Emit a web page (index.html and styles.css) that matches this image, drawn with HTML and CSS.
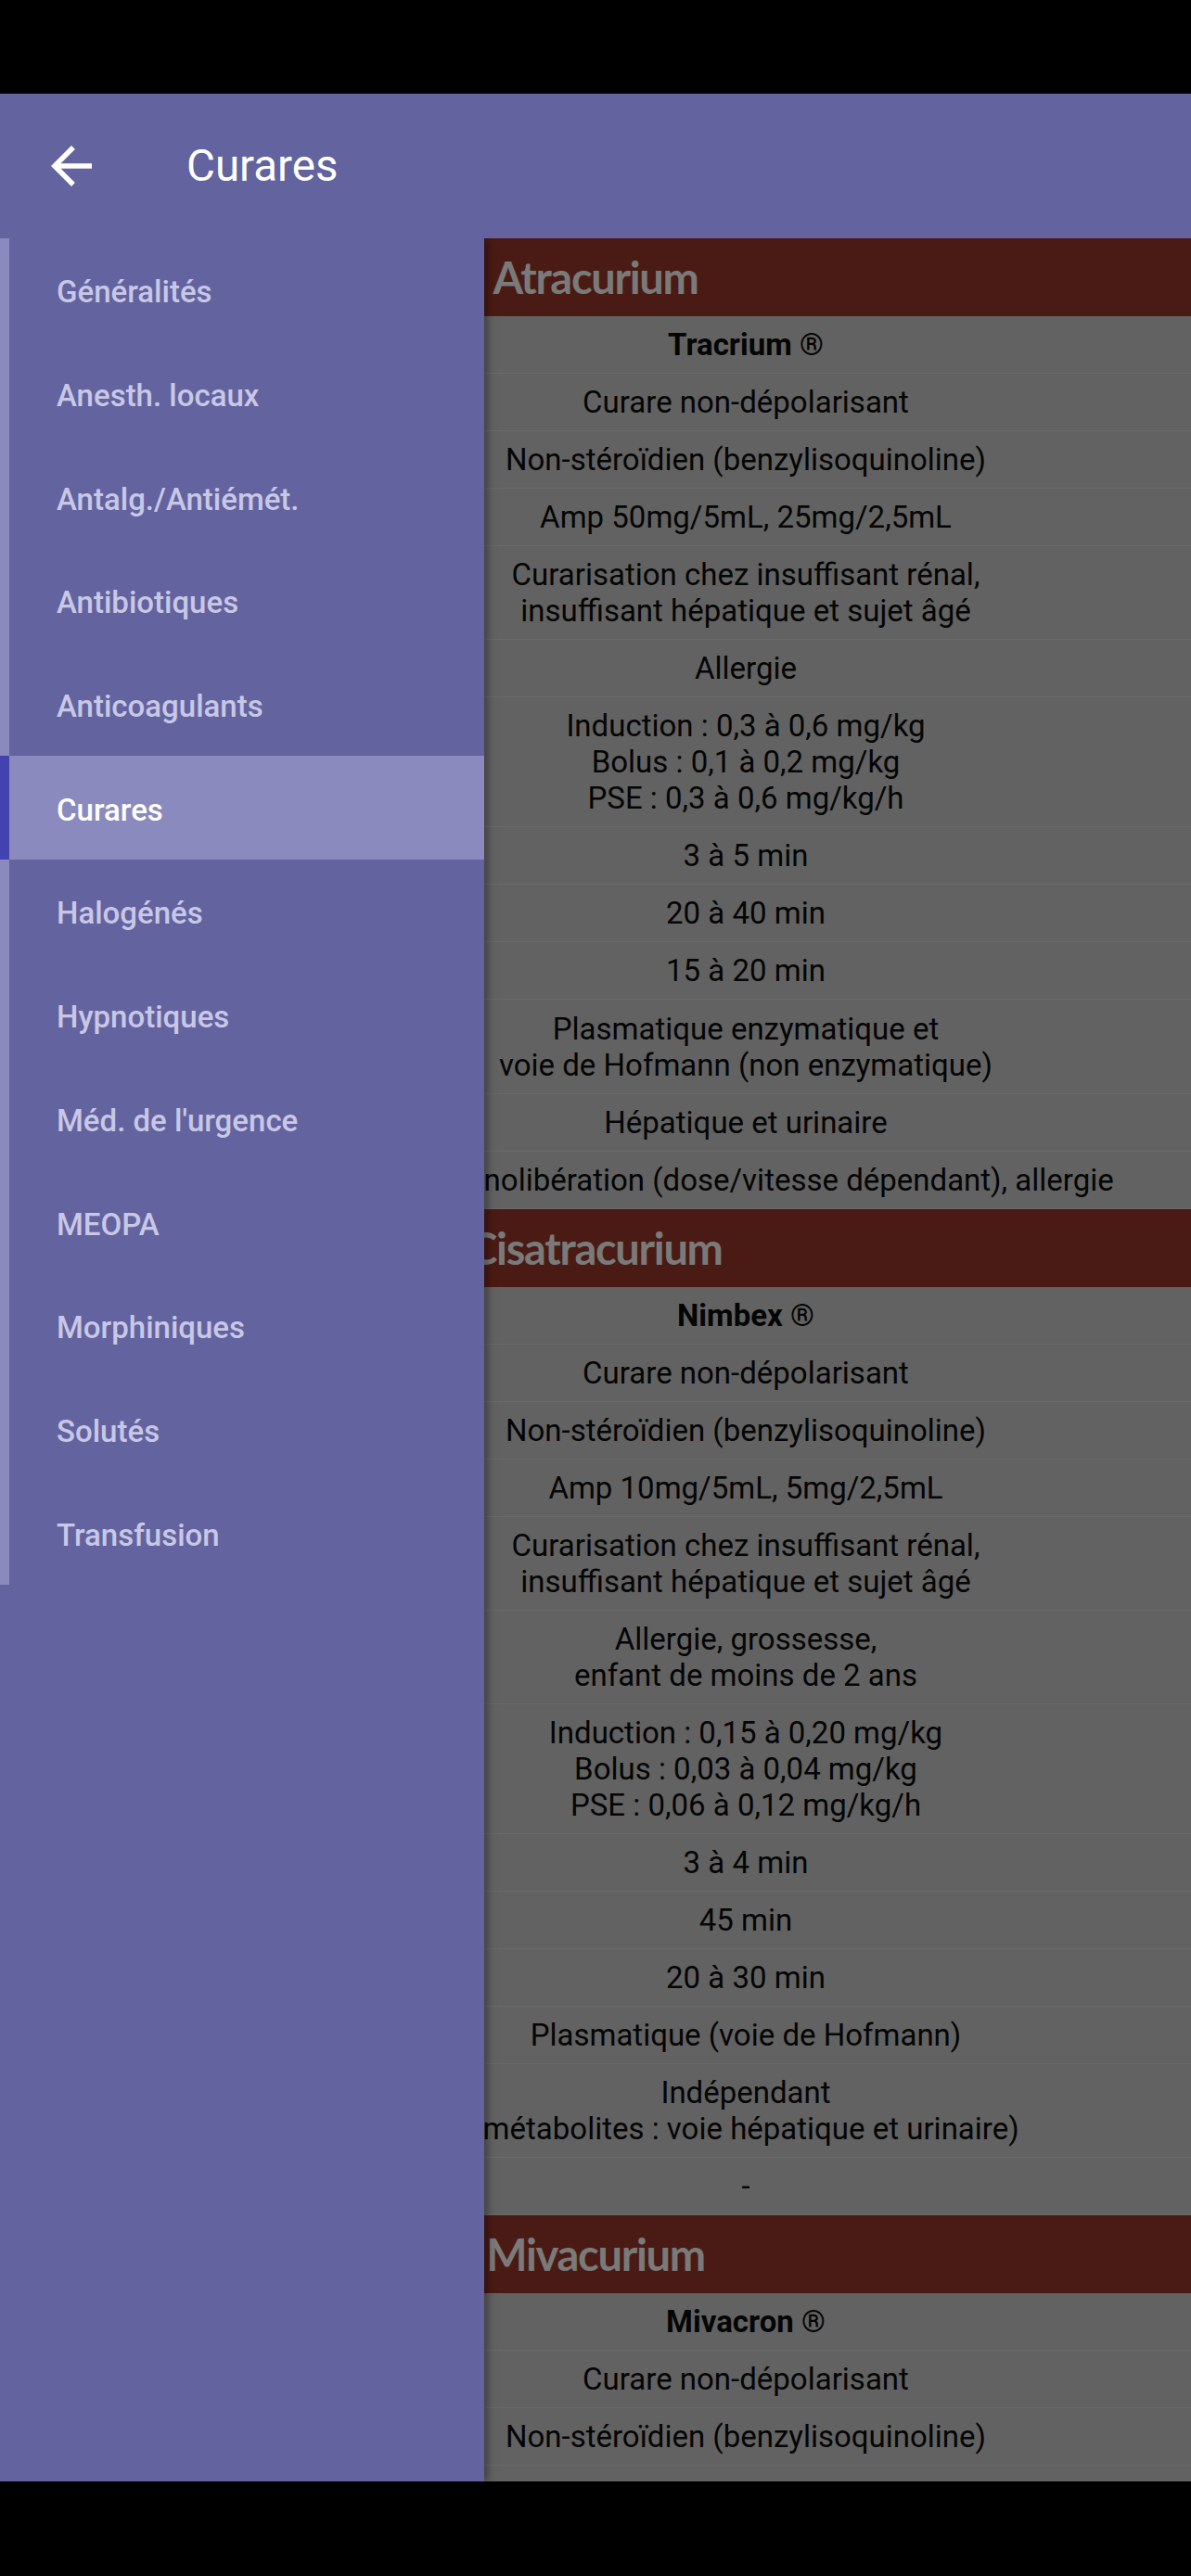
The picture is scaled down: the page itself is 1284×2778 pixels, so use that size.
FILE: index.html
```html
<!DOCTYPE html>
<html lang="fr">
<head>
<meta charset="utf-8">
<title>Curares</title>
<link rel="stylesheet" href="styles.css">
</head>
<body>
<div class="screen">
  <div class="status-bar"></div>
  <header class="toolbar">
    <svg class="back" viewBox="0 0 24 24" width="66" height="66"><path d="M20 11H7.83l5.59-5.59L12 4l-8 8 8 8 1.41-1.41L7.83 13H20v-2z" fill="#ffffff"/></svg>
    <h1 class="title">Curares</h1>
  </header>
  <div class="body-area">
    <main class="content">
      <section class="drug">
        <h2 class="drug-name">Atracurium</h2>
        <div class="row"><div class="label"></div><div class="value bold">Tracrium ®</div></div>
        <div class="row"><div class="label"></div><div class="value">Curare non-dépolarisant</div></div>
        <div class="row"><div class="label"></div><div class="value">Non-stéroïdien (benzylisoquinoline)</div></div>
        <div class="row"><div class="label"></div><div class="value">Amp 50mg/5mL, 25mg/2,5mL</div></div>
        <div class="row"><div class="label"></div><div class="value">Curarisation chez insuffisant rénal,<br>insuffisant hépatique et sujet âgé</div></div>
        <div class="row"><div class="label"></div><div class="value">Allergie</div></div>
        <div class="row"><div class="label"></div><div class="value">Induction : 0,3 à 0,6 mg/kg<br>Bolus : 0,1 à 0,2 mg/kg<br>PSE : 0,3 à 0,6 mg/kg/h</div></div>
        <div class="row"><div class="label"></div><div class="value">3 à 5 min</div></div>
        <div class="row"><div class="label"></div><div class="value">20 à 40 min</div></div>
        <div class="row"><div class="label"></div><div class="value">15 à 20 min</div></div>
        <div class="row"><div class="label"></div><div class="value">Plasmatique enzymatique et<br>voie de Hofmann (non enzymatique)</div></div>
        <div class="row"><div class="label"></div><div class="value">Hépatique et urinaire</div></div>
        <div class="row"><div class="label"></div><div class="value nowrap">Histaminolibération (dose/vitesse dépendant), allergie</div></div>
      </section>
      <section class="drug">
        <h2 class="drug-name">Cisatracurium</h2>
        <div class="row"><div class="label"></div><div class="value bold">Nimbex ®</div></div>
        <div class="row"><div class="label"></div><div class="value">Curare non-dépolarisant</div></div>
        <div class="row"><div class="label"></div><div class="value">Non-stéroïdien (benzylisoquinoline)</div></div>
        <div class="row"><div class="label"></div><div class="value">Amp 10mg/5mL, 5mg/2,5mL</div></div>
        <div class="row"><div class="label"></div><div class="value">Curarisation chez insuffisant rénal,<br>insuffisant hépatique et sujet âgé</div></div>
        <div class="row"><div class="label"></div><div class="value">Allergie, grossesse,<br>enfant de moins de 2 ans</div></div>
        <div class="row"><div class="label"></div><div class="value">Induction : 0,15 à 0,20 mg/kg<br>Bolus : 0,03 à 0,04 mg/kg<br>PSE : 0,06 à 0,12 mg/kg/h</div></div>
        <div class="row"><div class="label"></div><div class="value">3 à 4 min</div></div>
        <div class="row"><div class="label"></div><div class="value">45 min</div></div>
        <div class="row"><div class="label"></div><div class="value">20 à 30 min</div></div>
        <div class="row"><div class="label"></div><div class="value">Plasmatique (voie de Hofmann)</div></div>
        <div class="row"><div class="label"></div><div class="value nowrap">Indépendant<br>(métabolites : voie hépatique et urinaire)</div></div>
        <div class="row"><div class="label"></div><div class="value">-</div></div>
      </section>
      <section class="drug">
        <h2 class="drug-name">Mivacurium</h2>
        <div class="row"><div class="label"></div><div class="value bold">Mivacron ®</div></div>
        <div class="row"><div class="label"></div><div class="value">Curare non-dépolarisant</div></div>
        <div class="row"><div class="label"></div><div class="value">Non-stéroïdien (benzylisoquinoline)</div></div>
        <div class="row"><div class="label"></div><div class="value">Amp 10mg/5mL, 20mg/10mL</div></div>
      </section>
    </main>
    <nav class="drawer">
      <ul class="menu">
        <li class="item">Généralités</li>
        <li class="item">Anesth. locaux</li>
        <li class="item">Antalg./Antiémét.</li>
        <li class="item">Antibiotiques</li>
        <li class="item">Anticoagulants</li>
        <li class="item active">Curares</li>
        <li class="item">Halogénés</li>
        <li class="item">Hypnotiques</li>
        <li class="item">Méd. de l'urgence</li>
        <li class="item">MEOPA</li>
        <li class="item">Morphiniques</li>
        <li class="item">Solutés</li>
        <li class="item">Transfusion</li>
      </ul>
    </nav>
  </div>
  <div class="nav-bar"></div>
</div>
</body>
</html>
```
FILE: styles.css
```css
* { box-sizing: border-box; }
html, body { margin: 0; padding: 0; background: #000; }
body { font-family: Roboto, "Noto Sans", sans-serif; }

.screen {
  width: 1284px;
  height: 2778px;
  overflow: hidden;
  display: flex;
  flex-direction: column;
  background: #000;
}

.status-bar { height: 101px; flex: none; background: #000; }

.toolbar {
  height: 156px;
  flex: none;
  background: #63639f;
  display: flex;
  align-items: center;
  padding-left: 44px;
  position: relative;
  z-index: 2;
}
.back { display: block; flex: none; }
.title {
  margin: 0 0 0 91px;
  font-family: Roboto, sans-serif;
  font-weight: 400;
  font-size: 47.5px;
  color: #ffffff;
}

.body-area {
  height: 2419px;
  flex: none;
  position: relative;
  overflow: hidden;
  background: #626262;
}

.content { width: 1284px; }

.drug-name {
  margin: 0;
  height: 84px;
  background: #4a1b14;
  display: flex;
  align-items: center;
  justify-content: center;
  font-family: Lato, sans-serif;
  font-weight: 700;
  font-size: 47px;
  letter-spacing: -1.3px;
  color: #7a7a7a;
}

.row {
  display: grid;
  grid-template-columns: 324px 1fr;
  background: #626262;
  border-bottom: 1px solid #6a6a6a;
  padding: 11.05px 0 11px;
}
.value {
  text-align: center;
  font-size: 33px;
  line-height: 39px;
  color: #050505;
}
.value.bold { font-weight: 700; }
.value.nowrap { white-space: nowrap; display: flex; flex-direction: column; align-items: center; }

.drawer {
  position: absolute;
  left: 0;
  top: 0;
  width: 522px;
  height: 100%;
  background: #63639f;
  box-shadow: 4px 0 8px rgba(0,0,0,0.35);
}
.menu { list-style: none; margin: 0; padding: 0; }
.item {
  height: 111.7px;
  display: flex;
  align-items: center;
  border-left: 10px solid #8a8abf;
  padding-left: 51px;
  padding-top: 4px;
  font-family: Roboto, sans-serif;
  font-weight: 500;
  font-size: 33px;
  color: #c8c8e6;
}
.item.active {
  background: #8a8abe;
  border-left-color: #4343b0;
  color: #ffffff;
}

.nav-bar { height: 102px; flex: none; background: #000; }
```
